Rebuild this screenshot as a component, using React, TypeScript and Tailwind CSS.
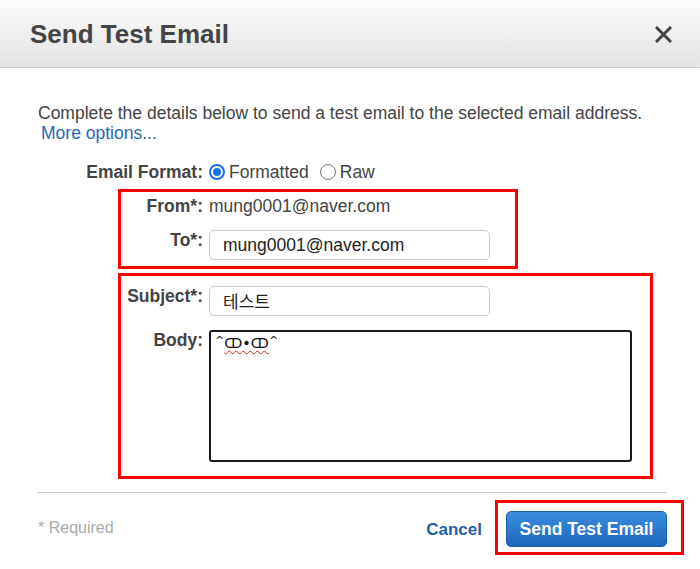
import React from "react";

function Radio({ checked }: { checked: boolean }) {
  return checked ? (
    <span className="inline-flex w-[16px] h-[16px] rounded-full border-[2px] border-[#1a73e8] items-center justify-center bg-white">
      <span className="w-[8px] h-[8px] rounded-full bg-[#1a73e8]" />
    </span>
  ) : (
    <span className="inline-block w-[16px] h-[16px] rounded-full border border-[#767676] bg-white" />
  );
}

export default function App() {
  return (
    <div className="relative w-[700px] h-[569px] bg-white overflow-hidden font-['Liberation_Sans',Arial,sans-serif] text-[#444444]">
      <div className="h-[68px] bg-gradient-to-b from-[#fcfcfc] to-[#e3e3e3] border-b border-[#cfcfcf] flex items-center justify-between pl-[30px] pr-[28px]">
        <h1 className="text-[26px] font-bold leading-[30px] text-[#444444]">Send Test Email</h1>
        <svg width="17" height="17" viewBox="0 0 17 17" className="mt-[2px]">
          <path d="M2 2L15 15M15 2L2 15" stroke="#444444" strokeWidth="3" strokeLinecap="square" />
        </svg>
      </div>

      <div className="px-[38px] pt-[35px]">
        <p className="text-[17.5px] leading-[20px]">
          Complete the details below to send a test email to the selected email address.
          <span className="block ml-[3px] text-[#1f69b8]">More options...</span>
        </p>

        <div className="mt-[19px] flex items-center h-[20px]">
          <div className="w-[165px] text-right font-bold text-[17.5px] leading-[20px]">Email Format:</div>
          <div className="ml-[6px] flex items-center text-[17.5px] leading-[20px]">
            <Radio checked />
            <span className="ml-[4px]">Formatted</span>
            <span className="ml-[11px] flex"><Radio checked={false} /></span>
            <span className="ml-[4px]">Raw</span>
          </div>
        </div>

        <div className="mt-[14px] flex items-center h-[20px]">
          <div className="w-[165px] text-right font-bold text-[17.5px] leading-[20px]">From*:</div>
          <div className="ml-[6px] text-[17.5px] leading-[20px]">mung0001@naver.com</div>
        </div>

        <div className="mt-[14px] flex items-start">
          <div className="w-[165px] text-right font-bold text-[17.5px] leading-[20px]">To*:</div>
          <div className="ml-[6px] w-[281px] h-[30px] border border-[#cccccc] rounded-[5px] pl-[13px] flex items-center text-[17.5px] text-[#222222]">
            mung0001@naver.com
          </div>
        </div>

        <div className="mt-[26px] flex items-start">
          <div className="w-[165px] text-right font-bold text-[17.5px] leading-[20px]">Subject*:</div>
          <div className="ml-[6px] w-[281px] h-[30px] border border-[#cccccc] rounded-[5px] pl-[13px] flex items-center text-[17px] text-[#222222] font-['Noto_Sans_CJK_KR',sans-serif]">
            테스트
          </div>
        </div>

        <div className="mt-[14px] flex items-start">
          <div className="w-[165px] text-right font-bold text-[17.5px] leading-[20px]">Body:</div>
          <div className="ml-[6px] w-[423px] h-[132px] border-[2px] border-[#1a1a1a] rounded-[3px] pl-[4px] pt-[3px] text-[14.5px] leading-[17px] text-[#111111] font-['DejaVu_Sans',sans-serif]">
            <span className="relative top-[-4px] text-[11px]">^</span>
            <span className="underline decoration-wavy decoration-[#e02020] decoration-1 underline-offset-2">ↀ•ↀ</span>
            <span className="relative top-[-4px] text-[11px]">^</span>
          </div>
        </div>

        <div className="mt-[30px] h-px bg-[#c8c8c8] mr-[-4px]" />

        <div className="mt-[18px] flex items-center justify-between mr-[-5px]">
          <span className="text-[16px] text-[#aaaaaa] mt-[-3px]">* Required</span>
          <div className="flex items-center">
            <span className="text-[17px] font-bold text-[#1f5fa8] mt-[1px]">Cancel</span>
            <button className="ml-[24px] w-[161px] h-[36px] rounded-[5px] border border-[#1d5fa6] bg-gradient-to-b from-[#3a8de0] to-[#1b68bd] text-white text-[17.5px] font-bold">
              Send Test Email
            </button>
          </div>
        </div>
      </div>

      <div className="absolute left-[118px] top-[189px] w-[400px] h-[80px] border-[3px] border-[#ff0000]" />
      <div className="absolute left-[118px] top-[273px] w-[535px] h-[206px] border-[3px] border-[#ff0000]" />
      <div className="absolute left-[495px] top-[500px] w-[189px] h-[55px] border-[3px] border-[#ff0000]" />
    </div>
  );
}
